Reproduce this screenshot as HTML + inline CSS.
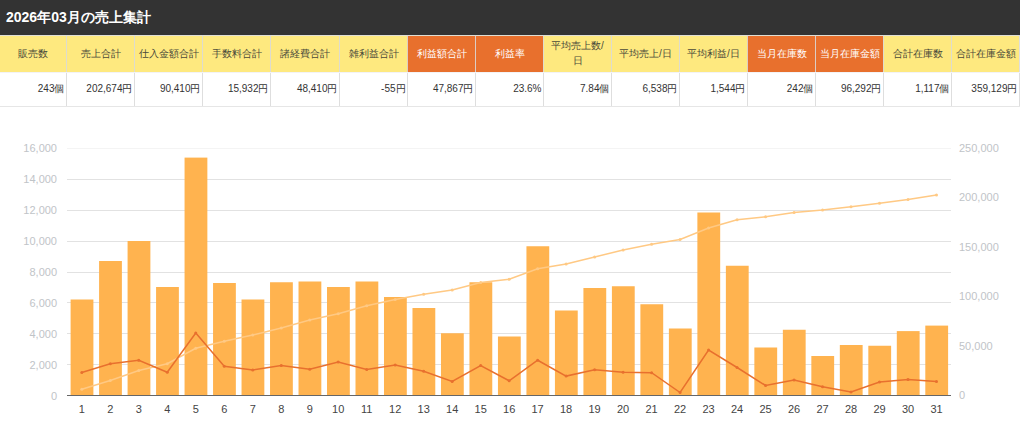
<!DOCTYPE html>
<html><head><meta charset="utf-8"><style>
html,body{margin:0;padding:0;background:#fff;width:1024px;height:428px;overflow:hidden;position:relative;font-family:"Liberation Sans",sans-serif;}
.title{position:absolute;left:0;top:0;width:1020px;height:35px;background:#333;color:#fff;font-weight:bold;font-size:14px;line-height:34px;}
.title span{position:absolute;left:6px;top:0;}
.tb{position:absolute;left:0;width:1020px;height:1px;}
.h{position:absolute;top:36px;height:36px;box-sizing:border-box;padding-bottom:2px;display:flex;align-items:center;justify-content:center;text-align:center;font-size:10px;line-height:15px;}
.y{background:#fee97f;color:#4a4a3a;}
.o{background:#e8702d;color:#fff;}
.d{position:absolute;top:72px;height:33px;line-height:33px;text-align:right;font-size:10px;color:#333;box-sizing:border-box;padding-right:1.5px;}
.vb{position:absolute;top:35px;width:1px;height:72px;background:rgba(218,218,218,0.88);}
svg{position:absolute;left:0;top:0;} svg text{font-family:"Liberation Sans",sans-serif;}
.yl{font-size:11px;fill:#bfc4c8;}
.xl{font-size:11px;fill:#444;}
</style></head><body>
<div class="title"><span>2026年03月の売上集計</span></div>
<div class="tb" style="top:35px;background:#e0ded4"></div>
<div class="h y" style="left:0px;width:66px;padding-left:0px"><span>販売数</span></div><div class="d" style="left:0px;width:66px">243個</div><div class="h y" style="left:66px;width:68px;padding-left:1px"><span>売上合計</span></div><div class="d" style="left:67px;width:67px">202,674円</div><div class="h y" style="left:134px;width:68px;padding-left:1px"><span>仕入金額合計</span></div><div class="d" style="left:135px;width:67px">90,410円</div><div class="h y" style="left:202px;width:68px;padding-left:1px"><span>手数料合計</span></div><div class="d" style="left:203px;width:67px">15,932円</div><div class="h y" style="left:270px;width:69px;padding-left:1px"><span>諸経費合計</span></div><div class="d" style="left:271px;width:68px">48,410円</div><div class="h y" style="left:339px;width:68px;padding-left:1px"><span>雑利益合計</span></div><div class="d" style="left:340px;width:67px">-55円</div><div class="h o" style="left:407px;width:68px;padding-left:1px"><span>利益額合計</span></div><div class="d" style="left:408px;width:67px">47,867円</div><div class="h o" style="left:475px;width:68px;padding-left:1px"><span>利益率</span></div><div class="d" style="left:476px;width:67px">23.6%</div><div class="h y" style="left:543px;width:68px;padding-left:1px"><span>平均売上数/<br>日</span></div><div class="d" style="left:544px;width:67px">7.84個</div><div class="h y" style="left:611px;width:68px;padding-left:1px"><span>平均売上/日</span></div><div class="d" style="left:612px;width:67px">6,538円</div><div class="h y" style="left:679px;width:68px;padding-left:1px"><span>平均利益/日</span></div><div class="d" style="left:680px;width:67px">1,544円</div><div class="h o" style="left:747px;width:68px;padding-left:1px"><span>当月在庫数</span></div><div class="d" style="left:748px;width:67px">242個</div><div class="h o" style="left:815px;width:68px;padding-left:1px"><span>当月在庫金額</span></div><div class="d" style="left:816px;width:67px">96,292円</div><div class="h y" style="left:883px;width:68px;padding-left:1px"><span>合計在庫数</span></div><div class="d" style="left:884px;width:67px">1,117個</div><div class="h y" style="left:951px;width:68px;padding-left:1px"><span>合計在庫金額</span></div><div class="d" style="left:952px;width:67px">359,129円</div><div class="vb" style="left:66px"></div><div class="vb" style="left:134px"></div><div class="vb" style="left:202px"></div><div class="vb" style="left:270px"></div><div class="vb" style="left:339px"></div><div class="vb" style="left:407px"></div><div class="vb" style="left:475px"></div><div class="vb" style="left:543px"></div><div class="vb" style="left:611px"></div><div class="vb" style="left:679px"></div><div class="vb" style="left:747px"></div><div class="vb" style="left:815px"></div><div class="vb" style="left:883px"></div><div class="vb" style="left:951px"></div><div class="vb" style="left:1019px"></div>
<div class="tb" style="top:72px;background:#f3f3f6"></div>
<div class="tb" style="top:106px;background:#e6e6e6"></div>
<svg width="1024" height="428" viewBox="0 0 1024 428">
<line x1="67" x2="951" y1="364.5" y2="364.5" stroke="#e2e2e2" stroke-width="1"/><line x1="67" x2="951" y1="333.5" y2="333.5" stroke="#e2e2e2" stroke-width="1"/><line x1="67" x2="951" y1="302.5" y2="302.5" stroke="#e2e2e2" stroke-width="1"/><line x1="67" x2="951" y1="272.5" y2="272.5" stroke="#e2e2e2" stroke-width="1"/><line x1="67" x2="951" y1="241.5" y2="241.5" stroke="#e2e2e2" stroke-width="1"/><line x1="67" x2="951" y1="210.5" y2="210.5" stroke="#e2e2e2" stroke-width="1"/><line x1="67" x2="951" y1="179.5" y2="179.5" stroke="#e2e2e2" stroke-width="1"/><line x1="67" x2="951" y1="148.5" y2="148.5" stroke="#f4f4f4" stroke-width="1"/><rect x="70.60" y="299.50" width="22.8" height="96.00" fill="#ffb34f"/><rect x="99.09" y="261.00" width="22.8" height="134.50" fill="#ffb34f"/><rect x="127.58" y="241.00" width="22.8" height="154.50" fill="#ffb34f"/><rect x="156.07" y="287.00" width="22.8" height="108.50" fill="#ffb34f"/><rect x="184.56" y="157.60" width="22.8" height="237.90" fill="#ffb34f"/><rect x="213.05" y="283.00" width="22.8" height="112.50" fill="#ffb34f"/><rect x="241.54" y="299.50" width="22.8" height="96.00" fill="#ffb34f"/><rect x="270.03" y="282.25" width="22.8" height="113.25" fill="#ffb34f"/><rect x="298.52" y="281.50" width="22.8" height="114.00" fill="#ffb34f"/><rect x="327.01" y="287.00" width="22.8" height="108.50" fill="#ffb34f"/><rect x="355.50" y="281.50" width="22.8" height="114.00" fill="#ffb34f"/><rect x="383.99" y="297.00" width="22.8" height="98.50" fill="#ffb34f"/><rect x="412.48" y="308.00" width="22.8" height="87.50" fill="#ffb34f"/><rect x="440.97" y="333.25" width="22.8" height="62.25" fill="#ffb34f"/><rect x="469.46" y="282.25" width="22.8" height="113.25" fill="#ffb34f"/><rect x="497.95" y="336.50" width="22.8" height="59.00" fill="#ffb34f"/><rect x="526.44" y="246.25" width="22.8" height="149.25" fill="#ffb34f"/><rect x="554.93" y="310.50" width="22.8" height="85.00" fill="#ffb34f"/><rect x="583.42" y="288.00" width="22.8" height="107.50" fill="#ffb34f"/><rect x="611.91" y="286.25" width="22.8" height="109.25" fill="#ffb34f"/><rect x="640.40" y="304.25" width="22.8" height="91.25" fill="#ffb34f"/><rect x="668.89" y="328.50" width="22.8" height="67.00" fill="#ffb34f"/><rect x="697.38" y="212.50" width="22.8" height="183.00" fill="#ffb34f"/><rect x="725.87" y="265.75" width="22.8" height="129.75" fill="#ffb34f"/><rect x="754.36" y="347.50" width="22.8" height="48.00" fill="#ffb34f"/><rect x="782.85" y="329.75" width="22.8" height="65.75" fill="#ffb34f"/><rect x="811.34" y="356.00" width="22.8" height="39.50" fill="#ffb34f"/><rect x="839.83" y="345.00" width="22.8" height="50.50" fill="#ffb34f"/><rect x="868.32" y="345.75" width="22.8" height="49.75" fill="#ffb34f"/><rect x="896.81" y="331.10" width="22.8" height="64.40" fill="#ffb34f"/><rect x="925.30" y="325.60" width="22.8" height="69.90" fill="#ffb34f"/><line x1="67" x2="951" y1="395.5" y2="395.5" stroke="#666" stroke-width="1"/><polyline points="81.80,389.25 110.29,380.5 138.78,370.5 167.27,363.75 195.76,348.25 224.25,341.25 252.74,335 281.23,328 309.72,320 338.21,313.75 366.70,305.75 395.19,299.5 423.68,294.25 452.17,290 480.66,282.5 509.15,279.25 537.64,268.75 566.13,264 594.62,257 623.11,250 651.60,244.25 680.09,239.5 708.58,228 737.07,219.75 765.56,216.75 794.05,212.5 822.54,210 851.03,206.75 879.52,203.25 908.01,199.5 936.50,195" fill="none" stroke="#ffc984" stroke-width="1.5"/><circle cx="81.80" cy="389.25" r="1.5" fill="#ffc984"/><circle cx="110.29" cy="380.5" r="1.5" fill="#ffc984"/><circle cx="138.78" cy="370.5" r="1.5" fill="#ffc984"/><circle cx="167.27" cy="363.75" r="1.5" fill="#ffc984"/><circle cx="195.76" cy="348.25" r="1.5" fill="#ffc984"/><circle cx="224.25" cy="341.25" r="1.5" fill="#ffc984"/><circle cx="252.74" cy="335" r="1.5" fill="#ffc984"/><circle cx="281.23" cy="328" r="1.5" fill="#ffc984"/><circle cx="309.72" cy="320" r="1.5" fill="#ffc984"/><circle cx="338.21" cy="313.75" r="1.5" fill="#ffc984"/><circle cx="366.70" cy="305.75" r="1.5" fill="#ffc984"/><circle cx="395.19" cy="299.5" r="1.5" fill="#ffc984"/><circle cx="423.68" cy="294.25" r="1.5" fill="#ffc984"/><circle cx="452.17" cy="290" r="1.5" fill="#ffc984"/><circle cx="480.66" cy="282.5" r="1.5" fill="#ffc984"/><circle cx="509.15" cy="279.25" r="1.5" fill="#ffc984"/><circle cx="537.64" cy="268.75" r="1.5" fill="#ffc984"/><circle cx="566.13" cy="264" r="1.5" fill="#ffc984"/><circle cx="594.62" cy="257" r="1.5" fill="#ffc984"/><circle cx="623.11" cy="250" r="1.5" fill="#ffc984"/><circle cx="651.60" cy="244.25" r="1.5" fill="#ffc984"/><circle cx="680.09" cy="239.5" r="1.5" fill="#ffc984"/><circle cx="708.58" cy="228" r="1.5" fill="#ffc984"/><circle cx="737.07" cy="219.75" r="1.5" fill="#ffc984"/><circle cx="765.56" cy="216.75" r="1.5" fill="#ffc984"/><circle cx="794.05" cy="212.5" r="1.5" fill="#ffc984"/><circle cx="822.54" cy="210" r="1.5" fill="#ffc984"/><circle cx="851.03" cy="206.75" r="1.5" fill="#ffc984"/><circle cx="879.52" cy="203.25" r="1.5" fill="#ffc984"/><circle cx="908.01" cy="199.5" r="1.5" fill="#ffc984"/><circle cx="936.50" cy="195" r="1.5" fill="#ffc984"/><polyline points="81.80,372.5 110.29,363.75 138.78,360.25 167.27,372.25 195.76,333 224.25,366.25 252.74,370 281.23,365.5 309.72,369.25 338.21,362 366.70,369.5 395.19,365 423.68,371.25 452.17,381.5 480.66,365.5 509.15,380.75 537.64,360.25 566.13,376.1 594.62,369.7 623.11,372.3 651.60,372.7 680.09,392.5 708.58,350 737.07,367.5 765.56,385.5 794.05,380 822.54,386.75 851.03,392 879.52,382 908.01,379.5 936.50,381.6" fill="none" stroke="#e8702e" stroke-width="1.5"/><circle cx="81.80" cy="372.5" r="1.5" fill="#e8702e"/><circle cx="110.29" cy="363.75" r="1.5" fill="#e8702e"/><circle cx="138.78" cy="360.25" r="1.5" fill="#e8702e"/><circle cx="167.27" cy="372.25" r="1.5" fill="#e8702e"/><circle cx="195.76" cy="333" r="1.5" fill="#e8702e"/><circle cx="224.25" cy="366.25" r="1.5" fill="#e8702e"/><circle cx="252.74" cy="370" r="1.5" fill="#e8702e"/><circle cx="281.23" cy="365.5" r="1.5" fill="#e8702e"/><circle cx="309.72" cy="369.25" r="1.5" fill="#e8702e"/><circle cx="338.21" cy="362" r="1.5" fill="#e8702e"/><circle cx="366.70" cy="369.5" r="1.5" fill="#e8702e"/><circle cx="395.19" cy="365" r="1.5" fill="#e8702e"/><circle cx="423.68" cy="371.25" r="1.5" fill="#e8702e"/><circle cx="452.17" cy="381.5" r="1.5" fill="#e8702e"/><circle cx="480.66" cy="365.5" r="1.5" fill="#e8702e"/><circle cx="509.15" cy="380.75" r="1.5" fill="#e8702e"/><circle cx="537.64" cy="360.25" r="1.5" fill="#e8702e"/><circle cx="566.13" cy="376.1" r="1.5" fill="#e8702e"/><circle cx="594.62" cy="369.7" r="1.5" fill="#e8702e"/><circle cx="623.11" cy="372.3" r="1.5" fill="#e8702e"/><circle cx="651.60" cy="372.7" r="1.5" fill="#e8702e"/><circle cx="680.09" cy="392.5" r="1.5" fill="#e8702e"/><circle cx="708.58" cy="350" r="1.5" fill="#e8702e"/><circle cx="737.07" cy="367.5" r="1.5" fill="#e8702e"/><circle cx="765.56" cy="385.5" r="1.5" fill="#e8702e"/><circle cx="794.05" cy="380" r="1.5" fill="#e8702e"/><circle cx="822.54" cy="386.75" r="1.5" fill="#e8702e"/><circle cx="851.03" cy="392" r="1.5" fill="#e8702e"/><circle cx="879.52" cy="382" r="1.5" fill="#e8702e"/><circle cx="908.01" cy="379.5" r="1.5" fill="#e8702e"/><circle cx="936.50" cy="381.6" r="1.5" fill="#e8702e"/><text x="57" y="399.50" text-anchor="end" class="yl">0</text><text x="57" y="368.60" text-anchor="end" class="yl">2,000</text><text x="57" y="337.70" text-anchor="end" class="yl">4,000</text><text x="57" y="306.80" text-anchor="end" class="yl">6,000</text><text x="57" y="275.90" text-anchor="end" class="yl">8,000</text><text x="57" y="245.00" text-anchor="end" class="yl">10,000</text><text x="57" y="214.10" text-anchor="end" class="yl">12,000</text><text x="57" y="183.20" text-anchor="end" class="yl">14,000</text><text x="57" y="152.30" text-anchor="end" class="yl">16,000</text><text x="959" y="399.00" class="yl">0</text><text x="959" y="349.60" class="yl">50,000</text><text x="959" y="300.20" class="yl">100,000</text><text x="959" y="250.80" class="yl">150,000</text><text x="959" y="201.40" class="yl">200,000</text><text x="959" y="152.00" class="yl">250,000</text><text x="81.80" y="412.5" text-anchor="middle" class="xl">1</text><text x="110.29" y="412.5" text-anchor="middle" class="xl">2</text><text x="138.78" y="412.5" text-anchor="middle" class="xl">3</text><text x="167.27" y="412.5" text-anchor="middle" class="xl">4</text><text x="195.76" y="412.5" text-anchor="middle" class="xl">5</text><text x="224.25" y="412.5" text-anchor="middle" class="xl">6</text><text x="252.74" y="412.5" text-anchor="middle" class="xl">7</text><text x="281.23" y="412.5" text-anchor="middle" class="xl">8</text><text x="309.72" y="412.5" text-anchor="middle" class="xl">9</text><text x="338.21" y="412.5" text-anchor="middle" class="xl">10</text><text x="366.70" y="412.5" text-anchor="middle" class="xl">11</text><text x="395.19" y="412.5" text-anchor="middle" class="xl">12</text><text x="423.68" y="412.5" text-anchor="middle" class="xl">13</text><text x="452.17" y="412.5" text-anchor="middle" class="xl">14</text><text x="480.66" y="412.5" text-anchor="middle" class="xl">15</text><text x="509.15" y="412.5" text-anchor="middle" class="xl">16</text><text x="537.64" y="412.5" text-anchor="middle" class="xl">17</text><text x="566.13" y="412.5" text-anchor="middle" class="xl">18</text><text x="594.62" y="412.5" text-anchor="middle" class="xl">19</text><text x="623.11" y="412.5" text-anchor="middle" class="xl">20</text><text x="651.60" y="412.5" text-anchor="middle" class="xl">21</text><text x="680.09" y="412.5" text-anchor="middle" class="xl">22</text><text x="708.58" y="412.5" text-anchor="middle" class="xl">23</text><text x="737.07" y="412.5" text-anchor="middle" class="xl">24</text><text x="765.56" y="412.5" text-anchor="middle" class="xl">25</text><text x="794.05" y="412.5" text-anchor="middle" class="xl">26</text><text x="822.54" y="412.5" text-anchor="middle" class="xl">27</text><text x="851.03" y="412.5" text-anchor="middle" class="xl">28</text><text x="879.52" y="412.5" text-anchor="middle" class="xl">29</text><text x="908.01" y="412.5" text-anchor="middle" class="xl">30</text><text x="936.50" y="412.5" text-anchor="middle" class="xl">31</text>
</svg>
</body></html>
